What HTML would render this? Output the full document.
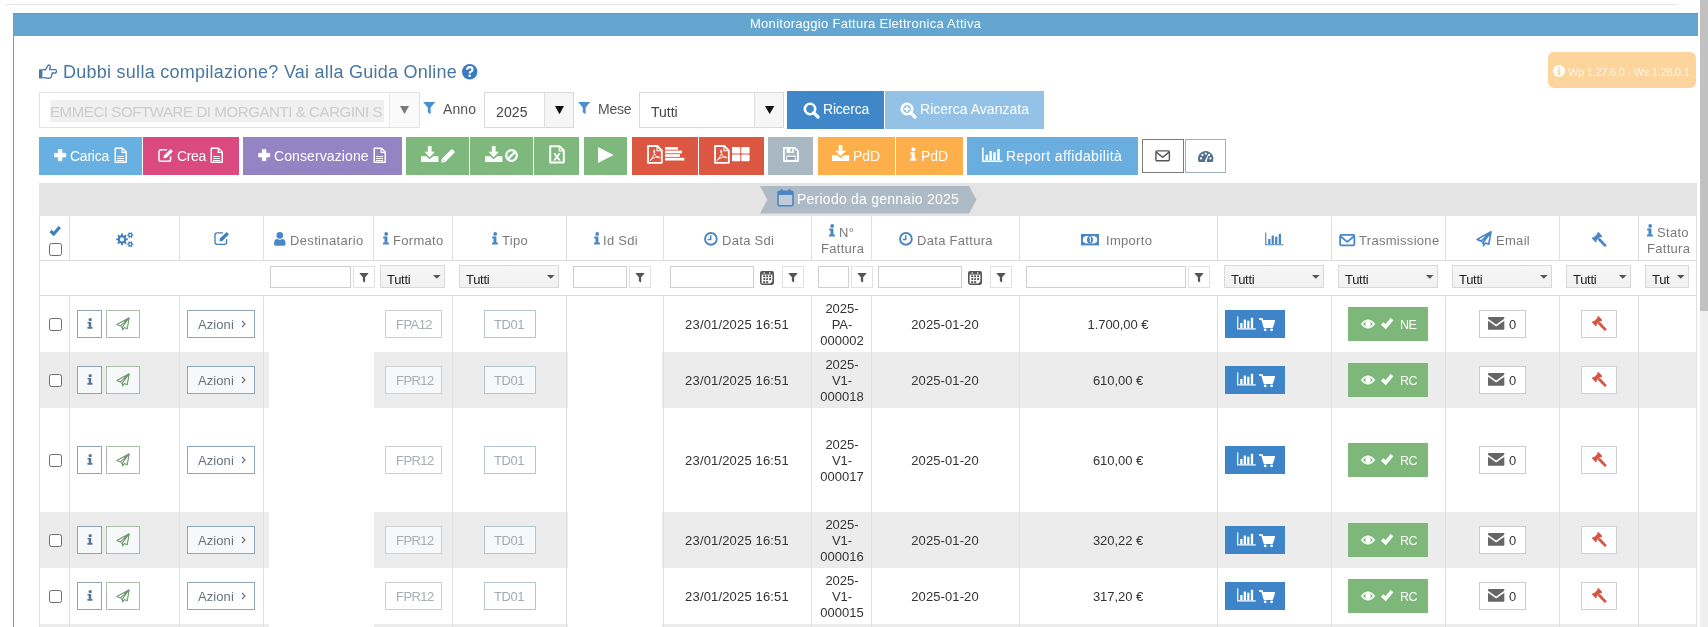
<!DOCTYPE html>
<html><head><meta charset="utf-8"><title>Monitoraggio Fattura Elettronica Attiva</title><style>
*{box-sizing:border-box;margin:0;padding:0}
html,body{width:1708px;height:627px;overflow:hidden;background:#fff;font-family:"Liberation Sans",sans-serif}
.a{position:absolute}
svg.a{display:block;overflow:visible}
.t{position:absolute;white-space:nowrap;line-height:1;will-change:transform}
</style></head><body>
<div class="a" style="left:5px;top:4px;width:1673px;height:1px;background:#e8e8e8"></div>
<div class="a" style="left:13px;top:13px;width:1px;height:614px;background:#7f99a5"></div>
<div class="a" style="left:13px;top:13px;width:1685px;height:23px;background:#64a6d0"></div>
<div class="a" style="left:13px;top:13px;width:1685px;height:1px;background:#6a98b4"></div>
<div class="t" style="left:750px;top:17.0px;font-size:13px;color:#fff;letter-spacing:0.28px">Monitoraggio Fattura Elettronica Attiva</div>
<div class="a" style="left:1700px;top:0px;width:8px;height:627px;background:#efefef"></div>
<div class="a" style="left:1700px;top:0px;width:8px;height:311px;background:#c1c1c1"></div>
<svg class="a" style="left:39px;top:64px" width="18" height="15" viewBox="0 0 18 15"><rect x="0" y="5.2" width="3.4" height="9.4" rx="0.5" fill="#4a79a6"/><path d="M3.4,5.8 H6.3 L8.6,2.2 Q9.4,0.9 10.4,1.1 Q11.6,1.5 11.3,3 L10.6,5.6 H16.4 Q17.5,5.6 17.5,7.3 Q17.5,9 16.3,9 H13.2 L12.4,12.6 Q12,14.1 10.6,14.1 Q8.1,14.4 6.1,13.6 H3.4" fill="none" stroke="#4a79a6" stroke-width="1.4" stroke-linejoin="round"/></svg>
<div class="t" style="left:63.3px;top:62.76px;font-size:18px;color:#4a77a2;letter-spacing:0.26px">Dubbi sulla compilazione? Vai alla Guida Online</div>
<svg class="a" style="left:462.3px;top:63.7px" width="15.4" height="15.4" viewBox="0 0 15.4 15.4"><circle cx="7.7" cy="7.7" r="7.7" fill="#3a7bbf"/><path d="M5.1,5.7 Q5.1,3.1000000000000005 7.7,3.1000000000000005 Q10.5,3.1000000000000005 10.5,5.4 Q10.5,6.9 8.7,7.7 Q7.7,8.2 7.7,9.5" fill="none" stroke="#fff" stroke-width="2.1"/><rect x="6.6" y="10.7" width="2.2" height="2.2" fill="#fff"/></svg>
<div class="a" style="left:1548px;top:52px;width:148px;height:36px;background:#fdd49b;border-radius:6px"></div>
<svg class="a" style="left:1552.5px;top:64.5px" width="12" height="12" viewBox="0 0 12 12"><circle cx="6.0" cy="6.0" r="6.0" fill="#fff"/><circle cx="6.0" cy="3.4" r="1.1" fill="#fdd49b"/><path d="M4.2,5.1 H6.9 V9.0 H7.7 V10.0 H4.2 V9.0 H5.1 V6.0H4.2Z" fill="#fdd49b"/></svg>
<div class="t" style="left:1568px;top:66.89px;font-size:11px;color:rgba(255,255,255,0.8);letter-spacing:-0.25px">Wp 1.27.6.0 - Ws 1.28.0.1</div>
<div class="a" style="left:39px;top:92px;width:381px;height:36px;background:#fff;border:1px solid #e3e3e3"></div>
<div class="a" style="left:50px;top:100px;width:334px;height:22px;background:#f0f0f0"></div>
<div class="t" style="left:50px;top:103.6px;font-size:15px;color:#cdcdcd;letter-spacing:-0.4px;width:333px;overflow:hidden">EMMECI SOFTWARE DI MORGANTI &amp; CARGINI SNC</div>
<div class="a" style="left:389px;top:93px;width:30px;height:34px;background:#fafafa;border-left:1px solid #e6e6e6"></div>
<svg class="a" style="left:400px;top:105.5px" width="9" height="8" viewBox="0 0 9 8"><path d="M0,0 H9 L4.5,8Z" fill="#7a7a7a"/></svg>
<svg class="a" style="left:423px;top:102.4px" width="12.4" height="12.2" viewBox="0 0 12 12"><path d="M0,0 H12 L7.4,5.4 V12 L4.6,10.2 V5.4Z" fill="#4a90d0"/></svg>
<div class="t" style="left:443px;top:102.15px;font-size:14px;color:#555;letter-spacing:0.1px">Anno</div>
<div class="a" style="left:484px;top:92px;width:90px;height:36px;background:#fff;border:1px solid #d9d9d9"></div>
<div class="a" style="left:544px;top:93px;width:29px;height:34px;background:#f6f6f6;border-left:1px solid #dedede"></div>
<div class="t" style="left:495.5px;top:104.85px;font-size:14px;color:#444;letter-spacing:0.1px">2025</div>
<svg class="a" style="left:554.6px;top:105.7px" width="9" height="8.2" viewBox="0 0 9 8.2"><path d="M0,0 H9 L4.5,8.2Z" fill="#111"/></svg>
<svg class="a" style="left:577.5px;top:102.4px" width="12.4" height="12.2" viewBox="0 0 12 12"><path d="M0,0 H12 L7.4,5.4 V12 L4.6,10.2 V5.4Z" fill="#4a90d0"/></svg>
<div class="t" style="left:597.7px;top:102.15px;font-size:14px;color:#555;letter-spacing:-0.2px">Mese</div>
<div class="a" style="left:639px;top:92px;width:145px;height:36px;background:#fff;border:1px solid #d9d9d9"></div>
<div class="a" style="left:754px;top:93px;width:29px;height:34px;background:#f6f6f6;border-left:1px solid #dedede"></div>
<div class="t" style="left:650.5px;top:104.85px;font-size:14px;color:#444">Tutti</div>
<svg class="a" style="left:764.7px;top:105.6px" width="9.3" height="8" viewBox="0 0 9.3 8"><path d="M0,0 H9.3 L4.65,8Z" fill="#111"/></svg>
<div class="a" style="left:787px;top:91px;width:97px;height:38px;background:#3f87c9"></div>
<svg class="a" style="left:802.7px;top:101.8px" width="16.5" height="16.5" viewBox="0 0 16.5 16.5"><circle cx="7" cy="7" r="5.2" fill="none" stroke="#fff" stroke-width="2.6"/><path d="M10.6,10.6 L15,15" stroke="#fff" stroke-width="3.2" stroke-linecap="round"/></svg>
<div class="t" style="left:822.6px;top:102.15px;font-size:14px;color:#fff;letter-spacing:-0.2px">Ricerca</div>
<div class="a" style="left:885px;top:91px;width:159px;height:38px;background:#94c2e7"></div>
<svg class="a" style="left:900px;top:101.8px" width="16.5" height="16.5" viewBox="0 0 16.5 16.5"><circle cx="7" cy="7" r="5.2" fill="none" stroke="#fff" stroke-width="2.6"/><path d="M10.6,10.6 L15,15" stroke="#fff" stroke-width="3.2" stroke-linecap="round"/><path d="M7,4.2 V9.8 M4.2,7 H9.8" stroke="#fff" stroke-width="1.8"/></svg>
<div class="t" style="left:920px;top:102.15px;font-size:14px;color:#fff;letter-spacing:0.02px">Ricerca Avanzata</div>
<div class="a" style="left:39px;top:137px;width:103px;height:38px;background:#67b0e1"></div>
<div class="a" style="left:143px;top:137px;width:96px;height:38px;background:#db4a7f"></div>
<div class="a" style="left:243px;top:137px;width:159px;height:38px;background:#9584c3"></div>
<div class="a" style="left:406px;top:137px;width:63px;height:38px;background:#7fb87c"></div>
<div class="a" style="left:470px;top:137px;width:63px;height:38px;background:#7fb87c"></div>
<div class="a" style="left:534px;top:137px;width:45px;height:38px;background:#7fb87c"></div>
<div class="a" style="left:584px;top:137px;width:43px;height:38px;background:#7fb87c"></div>
<div class="a" style="left:632px;top:137px;width:66px;height:38px;background:#dc5741"></div>
<div class="a" style="left:699px;top:137px;width:65px;height:38px;background:#dc5741"></div>
<div class="a" style="left:768px;top:137px;width:45px;height:38px;background:#a9b8c3"></div>
<div class="a" style="left:818px;top:137px;width:77px;height:38px;background:#fcaf4b"></div>
<div class="a" style="left:896px;top:137px;width:67px;height:38px;background:#fcaf4b"></div>
<div class="a" style="left:967px;top:137px;width:171px;height:38px;background:#6aaee0"></div>
<div class="a" style="left:1142px;top:139px;width:42px;height:34px;background:#fff;border:1px solid #7c7c7c"></div>
<div class="a" style="left:1185px;top:139px;width:41px;height:34px;background:#fff;border:1px solid #9db0bf"></div>
<svg class="a" style="left:53.7px;top:149px" width="12.3" height="12.3" viewBox="0 0 12 12"><path d="M4.2,0.5 H7.8 V4.2 H11.5 V7.8 H7.8 V11.5 H4.2 V7.8 H0.5 V4.2 H4.2Z" fill="#fff" stroke="#fff" stroke-width="0.6" stroke-linejoin="round"/></svg>
<div class="t" style="left:70.4px;top:148.85px;font-size:14px;color:#fff;letter-spacing:-0.25px">Carica</div>
<svg class="a" style="left:114px;top:147px" width="13" height="16" viewBox="0 0 13 16"><path d="M1.25,1.25 H8.5 L12.25,5 V15.25 H1.25Z" fill="none" stroke="#fff" stroke-width="1.5" stroke-linejoin="round"/><path d="M8.2,1.3 V5.3 H12.2" fill="none" stroke="#fff" stroke-width="1.2"/><path d="M3,9.5 H10 M3,11.5 H10 M3,13.5 H10" stroke="#fff" stroke-width="1"/></svg>
<svg class="a" style="left:158px;top:148.3px" width="15.5" height="14" viewBox="0 0 15.5 14"><path d="M9,1.8 H3.2 Q1,1.8 1,4 V11.2 Q1,13.3 3.2,13.3 H10.4 Q12.6,13.3 12.6,11.2 V8.2" fill="none" stroke="#fff" stroke-width="1.5"/><path d="M5.5,10.3 L5.9,7.6 L12.6,0.9 L15,3.3 L8.3,10 Z" fill="#fff"/></svg>
<div class="t" style="left:177.2px;top:148.85px;font-size:14px;color:#fff;letter-spacing:-0.35px">Crea</div>
<svg class="a" style="left:210px;top:147px" width="13" height="16" viewBox="0 0 13 16"><path d="M1.25,1.25 H8.5 L12.25,5 V15.25 H1.25Z" fill="none" stroke="#fff" stroke-width="1.5" stroke-linejoin="round"/><path d="M8.2,1.3 V5.3 H12.2" fill="none" stroke="#fff" stroke-width="1.2"/><path d="M3,9.5 H10 M3,11.5 H10 M3,13.5 H10" stroke="#fff" stroke-width="1"/></svg>
<svg class="a" style="left:258px;top:149px" width="12.3" height="12.3" viewBox="0 0 12 12"><path d="M4.2,0.5 H7.8 V4.2 H11.5 V7.8 H7.8 V11.5 H4.2 V7.8 H0.5 V4.2 H4.2Z" fill="#fff" stroke="#fff" stroke-width="0.6" stroke-linejoin="round"/></svg>
<div class="t" style="left:274px;top:148.85px;font-size:14px;color:#fff;letter-spacing:0.1px">Conservazione</div>
<svg class="a" style="left:373px;top:147px" width="13" height="16" viewBox="0 0 13 16"><path d="M1.25,1.25 H8.5 L12.25,5 V15.25 H1.25Z" fill="none" stroke="#fff" stroke-width="1.5" stroke-linejoin="round"/><path d="M8.2,1.3 V5.3 H12.2" fill="none" stroke="#fff" stroke-width="1.2"/><path d="M3,9.5 H10 M3,11.5 H10 M3,13.5 H10" stroke="#fff" stroke-width="1"/></svg>
<svg class="a" style="left:420.6px;top:145.8px" width="17.4" height="16" viewBox="0 0 17.4 16"><path d="M6.8,0 H10.6 V5.8 H14 L8.7,11.2 L3.4,5.8 H6.8Z" fill="#fff"/><path d="M0,10.2 H5.2 L8.7,13.2 L12.2,10.2 H17.4 V16 H0Z" fill="#fff"/></svg>
<svg class="a" style="left:440.8px;top:148.5px" width="14" height="14" viewBox="0 0 14 14"><path d="M0.2,13.8 L0.9,9.8 L9.9,0.8 Q10.9,-0.2 11.9,0.8 L13.2,2.1 Q14.2,3.1 13.2,4.1 L4.2,13.1Z" fill="#fff"/><path d="M1.6,12.4 L2.6,11.4" stroke="#7fb87c" stroke-width="0.9"/></svg>
<svg class="a" style="left:484.6px;top:145.8px" width="17.4" height="16" viewBox="0 0 17.4 16"><path d="M6.8,0 H10.6 V5.8 H14 L8.7,11.2 L3.4,5.8 H6.8Z" fill="#fff"/><path d="M0,10.2 H5.2 L8.7,13.2 L12.2,10.2 H17.4 V16 H0Z" fill="#fff"/></svg>
<svg class="a" style="left:505px;top:149.2px" width="13" height="13" viewBox="0 0 13 13"><circle cx="6.5" cy="6.5" r="5.3" fill="none" stroke="#fff" stroke-width="2.3"/><path d="M3,10 L10,3" stroke="#fff" stroke-width="2.3"/></svg>
<svg class="a" style="left:549.2px;top:145px" width="16" height="19" viewBox="0 0 16 19"><path d="M1.2,1.2 H10.5 L14.8,5.5 V17.6 H1.2Z" fill="none" stroke="#fff" stroke-width="2" stroke-linejoin="round"/><path d="M10.2,1.5 V5.8 H14.5" fill="none" stroke="#fff" stroke-width="1.2"/><path d="M4.4,8.3 H6.6 L8,10.6 L9.4,8.3 H11.6 L9.2,11.9 L11.8,15.6 H9.5 L8,13.2 L6.5,15.6 H4.2 L6.8,11.9Z" fill="#fff"/></svg>
<svg class="a" style="left:597.8px;top:146.7px" width="15.5" height="16" viewBox="0 0 15.5 16"><path d="M0,0 L15.5,8 L0,16Z" fill="#fff"/></svg>
<svg class="a" style="left:646.5px;top:144.9px" width="16" height="19" viewBox="0 0 16 19"><path d="M1,1 H10.3 L14.8,5.5 V17.8 H1Z" fill="none" stroke="#fff" stroke-width="1.8" stroke-linejoin="round"/><path d="M10,1.3 V5.8 H14.5" fill="none" stroke="#fff" stroke-width="1.1"/><path d="M3.2,15.6 Q5,13 7,10 Q8,7.5 7.6,5.4 Q7.3,4.3 6.8,5.3 Q6.5,7 8,9.7 Q9.5,12.2 12.3,12.8 Q13.2,12.9 12.6,12.2 Q11.5,11.5 8.5,12.2 Q5,13.2 3.2,15.6" fill="none" stroke="#fff" stroke-width="1"/></svg>
<svg class="a" style="left:665.2px;top:147.2px" width="19.3" height="13.5" viewBox="0 0 19.3 13.5"><rect x="0" y="0" width="13" height="2.7" fill="#fff"/><rect x="0" y="3.6" width="17" height="2.7" fill="#fff"/><rect x="0" y="7.2" width="15" height="2.7" fill="#fff"/><rect x="0" y="10.8" width="19.3" height="2.7" fill="#fff"/></svg>
<svg class="a" style="left:713.8px;top:144.9px" width="16" height="19" viewBox="0 0 16 19"><path d="M1,1 H10.3 L14.8,5.5 V17.8 H1Z" fill="none" stroke="#fff" stroke-width="1.8" stroke-linejoin="round"/><path d="M10,1.3 V5.8 H14.5" fill="none" stroke="#fff" stroke-width="1.1"/><path d="M3.2,15.6 Q5,13 7,10 Q8,7.5 7.6,5.4 Q7.3,4.3 6.8,5.3 Q6.5,7 8,9.7 Q9.5,12.2 12.3,12.8 Q13.2,12.9 12.6,12.2 Q11.5,11.5 8.5,12.2 Q5,13.2 3.2,15.6" fill="none" stroke="#fff" stroke-width="1"/></svg>
<svg class="a" style="left:732px;top:146.8px" width="17.6" height="14.2" viewBox="0 0 17.6 14.2"><rect x="0" y="0" width="8.3" height="6.6" rx="0.8" fill="#fff"/><rect x="9.3" y="0" width="8.3" height="6.6" rx="0.8" fill="#fff"/><rect x="0" y="7.6" width="8.3" height="6.6" rx="0.8" fill="#fff"/><rect x="9.3" y="7.6" width="8.3" height="6.6" rx="0.8" fill="#fff"/></svg>
<svg class="a" style="left:783.4px;top:146.9px" width="16" height="15" viewBox="0 0 16 15"><path d="M0.9,0.9 H11.8 L15,4.1 V14.1 H0.9Z" fill="none" stroke="#fff" stroke-width="1.8" stroke-linejoin="round"/><rect x="3.6" y="0.9" width="7.2" height="5" fill="#fff"/><rect x="7.4" y="1.6" width="1.8" height="3" fill="#a9b8c3"/><rect x="3.4" y="8.6" width="9.2" height="5.5" fill="#fff"/><rect x="4.3" y="9.8" width="7.4" height="3" fill="#8f9ea8"/></svg>
<svg class="a" style="left:832px;top:144.8px" width="17.2" height="16" viewBox="0 0 17.4 16"><path d="M6.8,0 H10.6 V5.8 H14 L8.7,11.2 L3.4,5.8 H6.8Z" fill="#fff"/><path d="M0,10.2 H5.2 L8.7,13.2 L12.2,10.2 H17.4 V16 H0Z" fill="#fff"/></svg>
<div class="t" style="left:852.5px;top:148.85px;font-size:14px;color:#fff;letter-spacing:-0.1px">PdD</div>
<svg class="a" style="left:910.4px;top:146.8px" width="6.4" height="14" viewBox="0 0 6 12.5"><circle cx="3.2" cy="1.9" r="1.9" fill="#fff"/><path d="M0.2,4.5 H4.4 V10.4 H5.9 V12.5 H0 V10.4 H1.5 V6.5 H0.2Z" fill="#fff"/></svg>
<div class="t" style="left:920.5px;top:148.85px;font-size:14px;color:#fff;letter-spacing:-0.1px">PdD</div>
<svg class="a" style="left:982px;top:146.7px" width="20.7" height="15.8" viewBox="0 0 20.5 14.5"><path d="M0.8,0 V13.6 H20.5" fill="none" stroke="#fff" stroke-width="1.6"/><rect x="3.5" y="7.2" width="2.5" height="5.6" fill="#fff"/><rect x="7.3" y="3.4" width="2.5" height="9.4" fill="#fff"/><rect x="11.1" y="4.7" width="2.5" height="8.1" fill="#fff"/><rect x="15.1" y="1.5" width="2.5" height="11.3" fill="#fff"/></svg>
<div class="t" style="left:1006.2px;top:148.85px;font-size:14px;color:#fff;letter-spacing:0.4px">Report affidabilità</div>
<svg class="a" style="left:1155px;top:150.2px" width="15.3" height="11.7" viewBox="0 0 15.6 12"><rect x="0.9" y="0.9" width="13.8" height="10.2" rx="1.1" fill="none" stroke="#555" stroke-width="1.45"/><path d="M1.2,2.2 L7.8,7.6 L14.4,2.2" fill="none" stroke="#555" stroke-width="1.45"/></svg>
<svg class="a" style="left:1197.7px;top:150.6px" width="15.4" height="11.2" viewBox="0 0 15.4 11.2"><path d="M0.75,11 A7.7,7.7 0 1,1 14.65,11Z" fill="#52708e"/><path d="M6.9,10.2 Q7.2,11.2 8.2,11 Q9.2,10.6 8.9,9.6 L10.6,3.6 L10.1,3.5 L7.4,8.8 Q6.6,9.4 6.9,10.2Z" fill="#fff"/><circle cx="3.0" cy="7.4" r="1.15" fill="#fff"/><circle cx="4.4" cy="4.0" r="1.15" fill="#fff"/><circle cx="7.7" cy="2.6" r="1.15" fill="#fff"/><circle cx="11.0" cy="4.0" r="1.15" fill="#fff"/><circle cx="12.4" cy="7.4" r="1.15" fill="#fff"/></svg>
<div class="a" style="left:39px;top:183px;width:1658px;height:33px;background:#e4e4e4"></div>
<svg class="a" style="left:759.5px;top:186px" width="217" height="27.5" viewBox="0 0 217 27.5"><polygon points="0,0 209,0 216.5,13.75 209,27.5 0,27.5 7.3,13.75" fill="#aebbc6"/></svg>
<svg class="a" style="left:776.7px;top:188.5px" width="17" height="17.6" viewBox="0 0 17 17.8"><rect x="0.9" y="2.4" width="15.2" height="14.6" rx="1.5" fill="#c0ccd6" stroke="#4a86c5" stroke-width="1.6"/><rect x="0.9" y="2.4" width="15.2" height="3.6" fill="#4a86c5"/><rect x="3.6" y="0" width="2" height="4.4" rx="0.6" fill="#4a86c5"/><rect x="11.4" y="0" width="2" height="4.4" rx="0.6" fill="#4a86c5"/></svg>
<div class="t" style="left:797px;top:192.15px;font-size:14px;color:#fff;letter-spacing:0.24px">Periodo da gennaio 2025</div>
<div class="a" style="left:39px;top:216px;width:1658px;height:79px;background:#fff"></div>
<div class="a" style="left:39px;top:352px;width:1658px;height:56px;background:#ececec"></div>
<div class="a" style="left:39px;top:512px;width:1658px;height:56px;background:#ececec"></div>
<div class="a" style="left:39px;top:624px;width:1658px;height:76px;background:#ececec"></div>
<div class="a" style="left:39px;top:216px;width:1px;height:44px;background:#e0e0e0"></div>
<div class="a" style="left:69px;top:216px;width:1px;height:44px;background:#e0e0e0"></div>
<div class="a" style="left:179px;top:216px;width:1px;height:44px;background:#e0e0e0"></div>
<div class="a" style="left:263px;top:216px;width:1px;height:44px;background:#e0e0e0"></div>
<div class="a" style="left:373px;top:216px;width:1px;height:44px;background:#e0e0e0"></div>
<div class="a" style="left:452px;top:216px;width:1px;height:44px;background:#e0e0e0"></div>
<div class="a" style="left:566px;top:216px;width:1px;height:44px;background:#e0e0e0"></div>
<div class="a" style="left:663px;top:216px;width:1px;height:44px;background:#e0e0e0"></div>
<div class="a" style="left:811px;top:216px;width:1px;height:44px;background:#e0e0e0"></div>
<div class="a" style="left:871px;top:216px;width:1px;height:44px;background:#e0e0e0"></div>
<div class="a" style="left:1019px;top:216px;width:1px;height:44px;background:#e0e0e0"></div>
<div class="a" style="left:1217px;top:216px;width:1px;height:44px;background:#e0e0e0"></div>
<div class="a" style="left:1331px;top:216px;width:1px;height:44px;background:#e0e0e0"></div>
<div class="a" style="left:1445px;top:216px;width:1px;height:44px;background:#e0e0e0"></div>
<div class="a" style="left:1559px;top:216px;width:1px;height:44px;background:#e0e0e0"></div>
<div class="a" style="left:1638px;top:216px;width:1px;height:44px;background:#e0e0e0"></div>
<div class="a" style="left:1696px;top:216px;width:1px;height:44px;background:#e0e0e0"></div>
<div class="a" style="left:39px;top:260px;width:1658px;height:1px;background:#dcdcdc"></div>
<div class="a" style="left:39px;top:295px;width:1658px;height:1px;background:#dcdcdc"></div>
<div class="a" style="left:39px;top:260px;width:1px;height:35px;background:#e0e0e0"></div>
<div class="a" style="left:1696px;top:260px;width:1px;height:35px;background:#e0e0e0"></div>
<div class="a" style="left:39px;top:296px;width:1px;height:331px;background:#e0e0e0"></div>
<div class="a" style="left:69px;top:296px;width:1px;height:331px;background:#e0e0e0"></div>
<div class="a" style="left:179px;top:296px;width:1px;height:331px;background:#e0e0e0"></div>
<div class="a" style="left:263px;top:296px;width:1px;height:331px;background:#e0e0e0"></div>
<div class="a" style="left:452px;top:296px;width:1px;height:331px;background:#e0e0e0"></div>
<div class="a" style="left:566px;top:296px;width:1px;height:331px;background:#e0e0e0"></div>
<div class="a" style="left:663px;top:296px;width:1px;height:331px;background:#e0e0e0"></div>
<div class="a" style="left:811px;top:296px;width:1px;height:331px;background:#e0e0e0"></div>
<div class="a" style="left:871px;top:296px;width:1px;height:331px;background:#e0e0e0"></div>
<div class="a" style="left:1019px;top:296px;width:1px;height:331px;background:#e0e0e0"></div>
<div class="a" style="left:1217px;top:296px;width:1px;height:331px;background:#e0e0e0"></div>
<div class="a" style="left:1331px;top:296px;width:1px;height:331px;background:#e0e0e0"></div>
<div class="a" style="left:1445px;top:296px;width:1px;height:331px;background:#e0e0e0"></div>
<div class="a" style="left:1559px;top:296px;width:1px;height:331px;background:#e0e0e0"></div>
<div class="a" style="left:1638px;top:296px;width:1px;height:331px;background:#e0e0e0"></div>
<div class="a" style="left:1696px;top:296px;width:1px;height:331px;background:#e0e0e0"></div>
<div class="a" style="left:269px;top:296px;width:105px;height:56px;background:#fff"></div>
<div class="a" style="left:568px;top:296px;width:94px;height:56px;background:#fff"></div>
<div class="a" style="left:269px;top:352px;width:105px;height:56px;background:#fff"></div>
<div class="a" style="left:568px;top:352px;width:94px;height:56px;background:#fff"></div>
<div class="a" style="left:269px;top:408px;width:105px;height:104px;background:#fff"></div>
<div class="a" style="left:568px;top:408px;width:94px;height:104px;background:#fff"></div>
<div class="a" style="left:269px;top:512px;width:105px;height:56px;background:#fff"></div>
<div class="a" style="left:568px;top:512px;width:94px;height:56px;background:#fff"></div>
<div class="a" style="left:269px;top:568px;width:105px;height:56px;background:#fff"></div>
<div class="a" style="left:568px;top:568px;width:94px;height:56px;background:#fff"></div>
<div class="a" style="left:269px;top:624px;width:105px;height:76px;background:#fff"></div>
<div class="a" style="left:568px;top:624px;width:94px;height:76px;background:#fff"></div>
<svg class="a" style="left:49.2px;top:224.8px" width="12.2" height="10.2" viewBox="0 0 12 10.5"><path d="M1.3,6.2 L4.6,9.3 L10.8,2" fill="none" stroke="#3f7fbf" stroke-width="3.3" stroke-linecap="butt" stroke-linejoin="miter"/></svg>
<div class="a" style="left:49px;top:243px;width:13px;height:13px;background:#fff;border:1px solid #6b6b6b;border-radius:2.5px"></div>
<svg class="a" style="left:115.8px;top:231.6px" width="17.6" height="15.6" viewBox="0 0 17.6 15.6"><path d="M9.97,5.75 L10.20,6.48 L11.82,6.45 L11.82,8.35 L10.20,8.32 L9.97,9.05 L9.62,9.72 L10.79,10.84 L9.44,12.19 L8.32,11.02 L7.65,11.37 L6.92,11.60 L6.95,13.22 L5.05,13.22 L5.08,11.60 L4.35,11.37 L3.68,11.02 L2.56,12.19 L1.21,10.84 L2.38,9.72 L2.03,9.05 L1.80,8.32 L0.18,8.35 L0.18,6.45 L1.80,6.48 L2.03,5.75 L2.38,5.08 L1.21,3.96 L2.56,2.61 L3.68,3.78 L4.35,3.43 L5.08,3.20 L5.05,1.58 L6.95,1.58 L6.92,3.20 L7.65,3.43 L8.32,3.78 L9.44,2.61 L10.79,3.96 L9.62,5.08Z M8.10,7.40 A2.1,2.1 0 1,0 3.90,7.40 A2.1,2.1 0 1,0 8.10,7.40Z M16.21,2.00 L16.39,2.42 L17.31,2.38 L17.31,3.82 L16.39,3.78 L16.21,4.20 L15.93,4.57 L16.43,5.35 L15.18,6.07 L14.76,5.25 L14.30,5.30 L13.84,5.25 L13.42,6.07 L12.17,5.35 L12.67,4.57 L12.39,4.20 L12.21,3.78 L11.29,3.82 L11.29,2.38 L12.21,2.42 L12.39,2.00 L12.67,1.63 L12.17,0.85 L13.42,0.13 L13.84,0.95 L14.30,0.90 L14.76,0.95 L15.18,0.13 L16.43,0.85 L15.93,1.63Z M15.30,3.10 A1.0,1.0 0 1,0 13.30,3.10 A1.0,1.0 0 1,0 15.30,3.10Z M16.21,11.10 L16.39,11.52 L17.31,11.48 L17.31,12.92 L16.39,12.88 L16.21,13.30 L15.93,13.67 L16.43,14.45 L15.18,15.17 L14.76,14.35 L14.30,14.40 L13.84,14.35 L13.42,15.17 L12.17,14.45 L12.67,13.67 L12.39,13.30 L12.21,12.88 L11.29,12.92 L11.29,11.48 L12.21,11.52 L12.39,11.10 L12.67,10.73 L12.17,9.95 L13.42,9.23 L13.84,10.05 L14.30,10.00 L14.76,10.05 L15.18,9.23 L16.43,9.95 L15.93,10.73Z M15.30,12.20 A1.0,1.0 0 1,0 13.30,12.20 A1.0,1.0 0 1,0 15.30,12.20Z" fill="#3f7fbf" fill-rule="evenodd"/></svg>
<svg class="a" style="left:214px;top:231.2px" width="15.5" height="14" viewBox="0 0 15.5 14"><path d="M9,1.8 H3.2 Q1,1.8 1,4 V11.2 Q1,13.3 3.2,13.3 H10.4 Q12.6,13.3 12.6,11.2 V8.2" fill="none" stroke="#3f7fbf" stroke-width="1.35"/><path d="M5.5,10.3 L5.9,7.6 L12.6,0.9 L15,3.3 L8.3,10 Z" fill="#3f7fbf"/></svg>
<svg class="a" style="left:274px;top:232.2px" width="11.6" height="14" viewBox="0 0 11.6 14"><circle cx="5.8" cy="3.4" r="3.3" fill="#4887c8"/><path d="M0,11.8 Q0,7.6 2.8,7 Q5.8,8.6 8.8,7 Q11.6,7.6 11.6,11.8 Q11.6,13.8 9.8,13.8 H1.8 Q0,13.8 0,11.8Z" fill="#4887c8"/></svg>
<div class="t" style="left:289.6px;top:233.7px;font-size:13px;color:#7a7a7a;letter-spacing:0.34px">Destinatario</div>
<svg class="a" style="left:382.7px;top:232.3px" width="6" height="12.5" viewBox="0 0 6 12.5"><circle cx="3.2" cy="1.9" r="1.9" fill="#4887c8"/><path d="M0.2,4.5 H4.4 V10.4 H5.9 V12.5 H0 V10.4 H1.5 V6.5 H0.2Z" fill="#4887c8"/></svg>
<div class="t" style="left:392.6px;top:233.7px;font-size:13px;color:#7a7a7a;letter-spacing:0.31px">Formato</div>
<svg class="a" style="left:492.3px;top:232.3px" width="6" height="12.5" viewBox="0 0 6 12.5"><circle cx="3.2" cy="1.9" r="1.9" fill="#4887c8"/><path d="M0.2,4.5 H4.4 V10.4 H5.9 V12.5 H0 V10.4 H1.5 V6.5 H0.2Z" fill="#4887c8"/></svg>
<div class="t" style="left:501.8px;top:233.7px;font-size:13px;color:#7a7a7a;letter-spacing:0.3px">Tipo</div>
<svg class="a" style="left:594px;top:232.3px" width="6" height="12.5" viewBox="0 0 6 12.5"><circle cx="3.2" cy="1.9" r="1.9" fill="#4887c8"/><path d="M0.2,4.5 H4.4 V10.4 H5.9 V12.5 H0 V10.4 H1.5 V6.5 H0.2Z" fill="#4887c8"/></svg>
<div class="t" style="left:603px;top:233.7px;font-size:13px;color:#7a7a7a;letter-spacing:0.3px">Id Sdi</div>
<svg class="a" style="left:704px;top:232.2px" width="13.8" height="13.8" viewBox="0 0 13.8 13.8"><circle cx="6.9" cy="6.9" r="5.8500000000000005" fill="none" stroke="#4b86c0" stroke-width="1.9"/><path d="M6.7,3.3000000000000003 V7.5 H3.7" fill="none" stroke="#4b86c0" stroke-width="1.5"/></svg>
<div class="t" style="left:721.6px;top:233.7px;font-size:13px;color:#7a7a7a;letter-spacing:0.3px">Data Sdi</div>
<svg class="a" style="left:829px;top:224.2px" width="6" height="12.5" viewBox="0 0 6 12.5"><circle cx="3.2" cy="1.9" r="1.9" fill="#4887c8"/><path d="M0.2,4.5 H4.4 V10.4 H5.9 V12.5 H0 V10.4 H1.5 V6.5 H0.2Z" fill="#4887c8"/></svg>
<div class="t" style="left:838.8px;top:225.7px;font-size:13px;color:#7a7a7a;letter-spacing:0.3px">N°</div>
<div class="t" style="left:820.7px;top:241.7px;font-size:13px;color:#7a7a7a;letter-spacing:0.3px">Fattura</div>
<svg class="a" style="left:899.2px;top:232.2px" width="13.8" height="13.8" viewBox="0 0 13.8 13.8"><circle cx="6.9" cy="6.9" r="5.8500000000000005" fill="none" stroke="#4b86c0" stroke-width="1.9"/><path d="M6.7,3.3000000000000003 V7.5 H3.7" fill="none" stroke="#4b86c0" stroke-width="1.5"/></svg>
<div class="t" style="left:917.3px;top:233.7px;font-size:13px;color:#7a7a7a;letter-spacing:0.3px">Data Fattura</div>
<svg class="a" style="left:1081.2px;top:233.6px" width="18" height="11.4" viewBox="0 0 18 11.4"><rect x="1" y="1" width="16" height="9.4" fill="none" stroke="#4887c8" stroke-width="2"/><path d="M1,1 H4.2 Q4.2,3.6 1,3.6Z M17,1 H13.8 Q13.8,3.6 17,3.6Z M1,10.4 H4.2 Q4.2,7.8 1,7.8Z M17,10.4 H13.8 Q13.8,7.8 17,7.8Z" fill="#4887c8"/><ellipse cx="9" cy="5.7" rx="3" ry="3.8" fill="#4887c8"/><path d="M8.2,3.8 L9.4,3.2 V8.2" fill="none" stroke="#fff" stroke-width="1"/></svg>
<div class="t" style="left:1106.3px;top:233.7px;font-size:13px;color:#7a7a7a;letter-spacing:0.3px">Importo</div>
<svg class="a" style="left:1264.8px;top:232px" width="18.6" height="14" viewBox="0 0 20.5 14.5"><path d="M0.8,0 V13.6 H20.5" fill="none" stroke="#4887c8" stroke-width="1.3"/><rect x="3.5" y="7.2" width="2.5" height="5.6" fill="#4887c8"/><rect x="7.3" y="3.4" width="2.5" height="9.4" fill="#4887c8"/><rect x="11.1" y="4.7" width="2.5" height="8.1" fill="#4887c8"/><rect x="15.1" y="1.5" width="2.5" height="11.3" fill="#4887c8"/></svg>
<svg class="a" style="left:1338.8px;top:233.8px" width="16.5" height="12.4" viewBox="0 0 15.6 12"><rect x="0.9" y="0.9" width="13.8" height="10.2" rx="1.1" fill="none" stroke="#4887c8" stroke-width="1.7"/><path d="M1.2,2.2 L7.8,7.6 L14.4,2.2" fill="none" stroke="#4887c8" stroke-width="1.7"/></svg>
<div class="t" style="left:1359.3px;top:233.7px;font-size:13px;color:#7a7a7a;letter-spacing:0.3px">Trasmissione</div>
<svg class="a" style="left:1476.2px;top:231.4px" width="16" height="15.6" viewBox="0 0 16 16"><path d="M15.2,0.8 L0.9,8.6 L5.2,10.4 L15.2,0.8 L7.3,11.6 L7.6,15 L9.6,12.3 L12.9,13.6Z" fill="none" stroke="#4887c8" stroke-width="1.7" stroke-linejoin="round"/><path d="M5.2,10.4 L7.6,15 L7.3,11.6Z" fill="#4887c8"/></svg>
<div class="t" style="left:1496.2px;top:233.7px;font-size:13px;color:#7a7a7a;letter-spacing:0.3px">Email</div>
<svg class="a" style="left:1590.7px;top:231.8px" width="16" height="15.4" viewBox="0 0 16 16"><g transform="rotate(-43 5.9 5.4)"><rect x="1.9" y="3.3" width="8" height="4.2" fill="#4887c8"/><rect x="1.2" y="2.3" width="2" height="6.2" rx="0.6" fill="#4887c8"/><rect x="8.6" y="2.3" width="2" height="6.2" rx="0.6" fill="#4887c8"/></g><path d="M8.4,7.9 L14.3,13.9" stroke="#4887c8" stroke-width="2.9" stroke-linecap="round"/></svg>
<svg class="a" style="left:1646.9px;top:224.2px" width="6" height="12.5" viewBox="0 0 6 12.5"><circle cx="3.2" cy="1.9" r="1.9" fill="#4887c8"/><path d="M0.2,4.5 H4.4 V10.4 H5.9 V12.5 H0 V10.4 H1.5 V6.5 H0.2Z" fill="#4887c8"/></svg>
<div class="t" style="left:1657px;top:225.7px;font-size:13px;color:#7a7a7a;letter-spacing:0.3px">Stato</div>
<div class="t" style="left:1646.5px;top:241.7px;font-size:13px;color:#7a7a7a;letter-spacing:0.3px">Fattura</div>
<div class="a" style="left:270px;top:266px;width:81px;height:22px;background:#fff;border:1px solid #cfcfcf"></div>
<div class="a" style="left:353px;top:266px;width:22px;height:22px;background:#fff;border:1px solid #e2e2e2"></div>
<svg class="a" style="left:359.0px;top:272.8px" width="10" height="9.6" viewBox="0 0 12 12"><path d="M0,0 H12 L7.4,5.4 V12 L4.6,10.2 V5.4Z" fill="#555"/></svg>
<div class="a" style="left:380px;top:265px;width:65px;height:23px;background:linear-gradient(#f6f6f6,#f1f1f1);border:1px solid #d9d9d9"></div>
<div class="t" style="left:386.6px;top:272.8px;font-size:13px;color:#222;letter-spacing:-0.3px">Tutti</div>
<svg class="a" style="left:432.8px;top:275px" width="7.6" height="3.8" viewBox="0 0 7.6 3.8"><path d="M0,0 H7.6 L3.8,3.8Z" fill="#555"/></svg>
<div class="a" style="left:459px;top:265px;width:100px;height:23px;background:linear-gradient(#f6f6f6,#f1f1f1);border:1px solid #d9d9d9"></div>
<div class="t" style="left:465.6px;top:272.8px;font-size:13px;color:#222;letter-spacing:-0.3px">Tutti</div>
<svg class="a" style="left:546.8px;top:275px" width="7.6" height="3.8" viewBox="0 0 7.6 3.8"><path d="M0,0 H7.6 L3.8,3.8Z" fill="#555"/></svg>
<div class="a" style="left:573px;top:266px;width:54px;height:22px;background:#fff;border:1px solid #cfcfcf"></div>
<div class="a" style="left:629px;top:266px;width:22px;height:22px;background:#fff;border:1px solid #e2e2e2"></div>
<svg class="a" style="left:635.0px;top:272.8px" width="10" height="9.6" viewBox="0 0 12 12"><path d="M0,0 H12 L7.4,5.4 V12 L4.6,10.2 V5.4Z" fill="#555"/></svg>
<div class="a" style="left:670px;top:266px;width:84px;height:22px;background:#fff;border:1px solid #cfcfcf"></div>
<svg class="a" style="left:760.2px;top:270.7px" width="14" height="14" viewBox="0 0 14 14"><rect x="0.8" y="0.8" width="12.4" height="12.4" rx="1.6" fill="none" stroke="#555" stroke-width="1.6"/><rect x="0.8" y="0.8" width="12.4" height="2.8" fill="#555"/><circle cx="4.2" cy="2" r="0.8" fill="#fff"/><circle cx="9.7" cy="2" r="0.8" fill="#fff"/><path d="M13.2,9.6 L9.8,13.2 H13.2Z" fill="#555"/><rect x="3.3" y="4.3" width="1.9" height="1.9" fill="#555"/><rect x="3.3" y="7.2" width="1.9" height="1.9" fill="#555"/><rect x="3.3" y="10.2" width="1.9" height="1.9" fill="#555"/><rect x="6.2" y="4.3" width="1.9" height="1.9" fill="#555"/><rect x="6.2" y="7.2" width="1.9" height="1.9" fill="#555"/><rect x="6.2" y="10.2" width="1.9" height="1.9" fill="#555"/><rect x="9.2" y="4.3" width="1.9" height="1.9" fill="#555"/><rect x="9.2" y="7.2" width="1.9" height="1.9" fill="#555"/></svg>
<div class="a" style="left:782px;top:266px;width:22px;height:22px;background:#fff;border:1px solid #e2e2e2"></div>
<svg class="a" style="left:788.0px;top:272.8px" width="10" height="9.6" viewBox="0 0 12 12"><path d="M0,0 H12 L7.4,5.4 V12 L4.6,10.2 V5.4Z" fill="#555"/></svg>
<div class="a" style="left:818px;top:266px;width:31px;height:22px;background:#fff;border:1px solid #cfcfcf"></div>
<div class="a" style="left:851px;top:266px;width:22px;height:22px;background:#fff;border:1px solid #e2e2e2"></div>
<svg class="a" style="left:857.0px;top:272.8px" width="10" height="9.6" viewBox="0 0 12 12"><path d="M0,0 H12 L7.4,5.4 V12 L4.6,10.2 V5.4Z" fill="#555"/></svg>
<div class="a" style="left:878px;top:266px;width:84px;height:22px;background:#fff;border:1px solid #cfcfcf"></div>
<svg class="a" style="left:967.9px;top:270.8px" width="14" height="14" viewBox="0 0 14 14"><rect x="0.8" y="0.8" width="12.4" height="12.4" rx="1.6" fill="none" stroke="#555" stroke-width="1.6"/><rect x="0.8" y="0.8" width="12.4" height="2.8" fill="#555"/><circle cx="4.2" cy="2" r="0.8" fill="#fff"/><circle cx="9.7" cy="2" r="0.8" fill="#fff"/><path d="M13.2,9.6 L9.8,13.2 H13.2Z" fill="#555"/><rect x="3.3" y="4.3" width="1.9" height="1.9" fill="#555"/><rect x="3.3" y="7.2" width="1.9" height="1.9" fill="#555"/><rect x="3.3" y="10.2" width="1.9" height="1.9" fill="#555"/><rect x="6.2" y="4.3" width="1.9" height="1.9" fill="#555"/><rect x="6.2" y="7.2" width="1.9" height="1.9" fill="#555"/><rect x="6.2" y="10.2" width="1.9" height="1.9" fill="#555"/><rect x="9.2" y="4.3" width="1.9" height="1.9" fill="#555"/><rect x="9.2" y="7.2" width="1.9" height="1.9" fill="#555"/></svg>
<div class="a" style="left:990px;top:266px;width:22px;height:22px;background:#fff;border:1px solid #e2e2e2"></div>
<svg class="a" style="left:996.0px;top:272.8px" width="10" height="9.6" viewBox="0 0 12 12"><path d="M0,0 H12 L7.4,5.4 V12 L4.6,10.2 V5.4Z" fill="#555"/></svg>
<div class="a" style="left:1026px;top:266px;width:160px;height:22px;background:#fff;border:1px solid #cfcfcf"></div>
<div class="a" style="left:1188px;top:266px;width:22px;height:22px;background:#fff;border:1px solid #e2e2e2"></div>
<svg class="a" style="left:1194.0px;top:272.8px" width="10" height="9.6" viewBox="0 0 12 12"><path d="M0,0 H12 L7.4,5.4 V12 L4.6,10.2 V5.4Z" fill="#555"/></svg>
<div class="a" style="left:1224px;top:265px;width:100px;height:23px;background:linear-gradient(#f6f6f6,#f1f1f1);border:1px solid #d9d9d9"></div>
<div class="t" style="left:1230.6px;top:272.8px;font-size:13px;color:#222;letter-spacing:-0.3px">Tutti</div>
<svg class="a" style="left:1311.8px;top:275px" width="7.6" height="3.8" viewBox="0 0 7.6 3.8"><path d="M0,0 H7.6 L3.8,3.8Z" fill="#555"/></svg>
<div class="a" style="left:1338px;top:265px;width:100px;height:23px;background:linear-gradient(#f6f6f6,#f1f1f1);border:1px solid #d9d9d9"></div>
<div class="t" style="left:1344.6px;top:272.8px;font-size:13px;color:#222;letter-spacing:-0.3px">Tutti</div>
<svg class="a" style="left:1425.8px;top:275px" width="7.6" height="3.8" viewBox="0 0 7.6 3.8"><path d="M0,0 H7.6 L3.8,3.8Z" fill="#555"/></svg>
<div class="a" style="left:1452px;top:265px;width:100px;height:23px;background:linear-gradient(#f6f6f6,#f1f1f1);border:1px solid #d9d9d9"></div>
<div class="t" style="left:1458.6px;top:272.8px;font-size:13px;color:#222;letter-spacing:-0.3px">Tutti</div>
<svg class="a" style="left:1539.8px;top:275px" width="7.6" height="3.8" viewBox="0 0 7.6 3.8"><path d="M0,0 H7.6 L3.8,3.8Z" fill="#555"/></svg>
<div class="a" style="left:1566px;top:265px;width:65px;height:23px;background:linear-gradient(#f6f6f6,#f1f1f1);border:1px solid #d9d9d9"></div>
<div class="t" style="left:1572.6px;top:272.8px;font-size:13px;color:#222;letter-spacing:-0.3px">Tutti</div>
<svg class="a" style="left:1618.8px;top:275px" width="7.6" height="3.8" viewBox="0 0 7.6 3.8"><path d="M0,0 H7.6 L3.8,3.8Z" fill="#555"/></svg>
<div class="a" style="left:1645px;top:265px;width:44px;height:23px;background:linear-gradient(#f6f6f6,#f1f1f1);border:1px solid #d9d9d9"></div>
<div class="t" style="left:1651.6px;top:272.8px;font-size:13px;color:#222;letter-spacing:-0.3px">Tut</div>
<svg class="a" style="left:1676.8px;top:275px" width="7.6" height="3.8" viewBox="0 0 7.6 3.8"><path d="M0,0 H7.6 L3.8,3.8Z" fill="#555"/></svg>
<div class="a" style="left:49px;top:318.0px;width:13px;height:13px;background:#fff;border:1px solid #6b6b6b;border-radius:2.5px"></div>
<div class="a" style="left:77px;top:310.0px;width:25px;height:28px;background:#fff;border:1px solid #8fa4b6"></div>
<svg class="a" style="left:87px;top:318.2px" width="6" height="10.8" viewBox="0 0 6 12.5"><circle cx="3.2" cy="1.9" r="1.9" fill="#56769b"/><path d="M0.2,4.5 H4.4 V10.4 H5.9 V12.5 H0 V10.4 H1.5 V6.5 H0.2Z" fill="#56769b"/></svg>
<div class="a" style="left:106px;top:310.0px;width:34px;height:28px;background:#fff;border:1px solid #adbea9"></div>
<svg class="a" style="left:116px;top:317.0px" width="14" height="13.8" viewBox="0 0 16 16"><path d="M15.2,0.8 L0.9,8.6 L5.2,10.4 L15.2,0.8 L7.3,11.6 L7.6,15 L9.6,12.3 L12.9,13.6Z" fill="none" stroke="#6d9669" stroke-width="1.25" stroke-linejoin="round"/><path d="M5.2,10.4 L7.6,15 L7.3,11.6Z" fill="#6d9669"/></svg>
<div class="a" style="left:187px;top:310.0px;width:68px;height:28px;background:#fff;border:1px solid #8ea7ba"></div>
<div class="t" style="left:197.7px;top:318.0px;font-size:13px;color:#66737f;letter-spacing:0.08px">Azioni</div>
<svg class="a" style="left:240.6px;top:320.4px" width="5" height="8" viewBox="0 0 5 8"><path d="M1,1 L4,4 L1,7" fill="none" stroke="#66737f" stroke-width="1.1"/></svg>
<div class="a" style="left:385px;top:310.0px;width:57px;height:28px;background:#fff;border:1px solid #cdd3ca"></div>
<div class="t" style="left:395.6px;top:318.0px;font-size:13px;color:#a9aeb3;letter-spacing:-0.55px">FPA12</div>
<div class="a" style="left:484px;top:310.0px;width:52px;height:28px;background:#fff;border:1px solid #b5c6ce"></div>
<div class="t" style="left:494.2px;top:318.0px;font-size:13px;color:#a3abb2;letter-spacing:-0.45px">TD01</div>
<div class="t" style="left:587px;width:300px;text-align:center;top:318.0px;font-size:13px;color:#333;letter-spacing:0.16px">23/01/2025 16:51</div>
<div class="t" style="left:691.5px;width:300px;text-align:center;top:302.0px;font-size:13px;color:#333">2025-</div>
<div class="t" style="left:691.5px;width:300px;text-align:center;top:318.0px;font-size:13px;color:#333">PA-</div>
<div class="t" style="left:691.5px;width:300px;text-align:center;top:334.0px;font-size:13px;color:#333">000002</div>
<div class="t" style="left:795px;width:300px;text-align:center;top:318.0px;font-size:13px;color:#333;letter-spacing:0.1px">2025-01-20</div>
<div class="t" style="left:968px;width:300px;text-align:center;top:318.0px;font-size:13px;color:#333;letter-spacing:-0.05px">1.700,00 €</div>
<div class="a" style="left:1225px;top:310.0px;width:60px;height:28px;background:#3d85c8"></div>
<svg class="a" style="left:1236.8px;top:316.0px" width="18.8" height="14.2" viewBox="0 0 20.5 14.5"><path d="M0.8,0 V13.6 H20.5" fill="none" stroke="#fff" stroke-width="1.3"/><rect x="3.5" y="7.2" width="2.5" height="5.6" fill="#fff"/><rect x="7.3" y="3.4" width="2.5" height="9.4" fill="#fff"/><rect x="11.1" y="4.7" width="2.5" height="8.1" fill="#fff"/><rect x="15.1" y="1.5" width="2.5" height="11.3" fill="#fff"/></svg>
<svg class="a" style="left:1258.8px;top:318.0px" width="15.2" height="13.2" viewBox="0 0 15.2 13.2"><path d="M0,0.9 H3 L5.4,9 H13.3 L15.2,2.8 H4" fill="none" stroke="#fff" stroke-width="1.8" stroke-linejoin="round"/><path d="M4,2.8 H15.2 L13.3,9 H5.4Z" fill="#fff"/><circle cx="6.2" cy="11.8" r="1.4" fill="#fff"/><circle cx="12.6" cy="11.8" r="1.4" fill="#fff"/></svg>
<div class="a" style="left:1348px;top:307.0px;width:80px;height:34px;background:#7eb77a"></div>
<svg class="a" style="left:1360.8px;top:319.0px" width="14" height="10" viewBox="0 0 14 10"><path d="M0.8,5 Q7,-2.2 13.2,5 Q7,12.2 0.8,5Z" fill="none" stroke="#fff" stroke-width="1.6"/><circle cx="7" cy="5" r="2.7" fill="#fff"/></svg>
<svg class="a" style="left:1379.6px;top:317.4px" width="14.2" height="10.9" viewBox="0 0 12 10.5"><path d="M1.3,6.2 L4.6,9.3 L10.8,2" fill="none" stroke="#fff" stroke-width="3.4" stroke-linecap="butt" stroke-linejoin="miter"/></svg>
<div class="t" style="left:1399.5px;top:318.92px;font-size:12.5px;color:#fff;letter-spacing:-0.6px">NE</div>
<div class="a" style="left:1479px;top:310.0px;width:47px;height:28px;background:#fff;border:1px solid #cbcbcb"></div>
<svg class="a" style="left:1488.3px;top:317.2px" width="16.3" height="12.8" viewBox="0 0 16.3 12.8"><path d="M0,0.8 Q0,0 0.8,0 H15.5 Q16.3,0 16.3,0.8 V1.8 L8.15,7.4 L0,1.8Z" fill="#666"/><path d="M0,3.8 L8.15,9.4 L16.3,3.8 V12 Q16.3,12.8 15.5,12.8 H0.8 Q0,12.8 0,12Z" fill="#666"/></svg>
<div class="t" style="left:1509px;top:318.0px;font-size:13px;color:#333">0</div>
<div class="a" style="left:1581px;top:310.0px;width:36px;height:28px;background:#fff;border:1px solid #cfcfcf"></div>
<svg class="a" style="left:1590.8px;top:315.8px" width="16.2" height="15.4" viewBox="0 0 16 16"><g transform="rotate(-43 5.9 5.4)"><rect x="1.9" y="3.3" width="8" height="4.2" fill="#d9533f"/><rect x="1.2" y="2.3" width="2" height="6.2" rx="0.6" fill="#d9533f"/><rect x="8.6" y="2.3" width="2" height="6.2" rx="0.6" fill="#d9533f"/></g><path d="M8.4,7.9 L14.3,13.9" stroke="#d9533f" stroke-width="2.9" stroke-linecap="round"/></svg>
<div class="a" style="left:49px;top:374.0px;width:13px;height:13px;background:#fff;border:1px solid #6b6b6b;border-radius:2.5px"></div>
<div class="a" style="left:77px;top:366.0px;width:25px;height:28px;background:#f7f8fa;border:1px solid #8fa4b6"></div>
<svg class="a" style="left:87px;top:374.2px" width="6" height="10.8" viewBox="0 0 6 12.5"><circle cx="3.2" cy="1.9" r="1.9" fill="#56769b"/><path d="M0.2,4.5 H4.4 V10.4 H5.9 V12.5 H0 V10.4 H1.5 V6.5 H0.2Z" fill="#56769b"/></svg>
<div class="a" style="left:106px;top:366.0px;width:34px;height:28px;background:#f7f8fa;border:1px solid #adbea9"></div>
<svg class="a" style="left:116px;top:373.0px" width="14" height="13.8" viewBox="0 0 16 16"><path d="M15.2,0.8 L0.9,8.6 L5.2,10.4 L15.2,0.8 L7.3,11.6 L7.6,15 L9.6,12.3 L12.9,13.6Z" fill="none" stroke="#6d9669" stroke-width="1.25" stroke-linejoin="round"/><path d="M5.2,10.4 L7.6,15 L7.3,11.6Z" fill="#6d9669"/></svg>
<div class="a" style="left:187px;top:366.0px;width:68px;height:28px;background:#f7f8fa;border:1px solid #8ea7ba"></div>
<div class="t" style="left:197.7px;top:374.0px;font-size:13px;color:#66737f;letter-spacing:0.08px">Azioni</div>
<svg class="a" style="left:240.6px;top:376.4px" width="5" height="8" viewBox="0 0 5 8"><path d="M1,1 L4,4 L1,7" fill="none" stroke="#66737f" stroke-width="1.1"/></svg>
<div class="a" style="left:385px;top:366.0px;width:57px;height:28px;background:#f7f8fa;border:1px solid #cdd3ca"></div>
<div class="t" style="left:395.6px;top:374.0px;font-size:13px;color:#a9aeb3;letter-spacing:-0.55px">FPR12</div>
<div class="a" style="left:484px;top:366.0px;width:52px;height:28px;background:#f7f8fa;border:1px solid #b5c6ce"></div>
<div class="t" style="left:494.2px;top:374.0px;font-size:13px;color:#a3abb2;letter-spacing:-0.45px">TD01</div>
<div class="t" style="left:587px;width:300px;text-align:center;top:374.0px;font-size:13px;color:#333;letter-spacing:0.16px">23/01/2025 16:51</div>
<div class="t" style="left:691.5px;width:300px;text-align:center;top:358.0px;font-size:13px;color:#333">2025-</div>
<div class="t" style="left:691.5px;width:300px;text-align:center;top:374.0px;font-size:13px;color:#333">V1-</div>
<div class="t" style="left:691.5px;width:300px;text-align:center;top:390.0px;font-size:13px;color:#333">000018</div>
<div class="t" style="left:795px;width:300px;text-align:center;top:374.0px;font-size:13px;color:#333;letter-spacing:0.1px">2025-01-20</div>
<div class="t" style="left:968px;width:300px;text-align:center;top:374.0px;font-size:13px;color:#333;letter-spacing:-0.05px">610,00 €</div>
<div class="a" style="left:1225px;top:366.0px;width:60px;height:28px;background:#3d85c8"></div>
<svg class="a" style="left:1236.8px;top:372.0px" width="18.8" height="14.2" viewBox="0 0 20.5 14.5"><path d="M0.8,0 V13.6 H20.5" fill="none" stroke="#fff" stroke-width="1.3"/><rect x="3.5" y="7.2" width="2.5" height="5.6" fill="#fff"/><rect x="7.3" y="3.4" width="2.5" height="9.4" fill="#fff"/><rect x="11.1" y="4.7" width="2.5" height="8.1" fill="#fff"/><rect x="15.1" y="1.5" width="2.5" height="11.3" fill="#fff"/></svg>
<svg class="a" style="left:1258.8px;top:374.0px" width="15.2" height="13.2" viewBox="0 0 15.2 13.2"><path d="M0,0.9 H3 L5.4,9 H13.3 L15.2,2.8 H4" fill="none" stroke="#fff" stroke-width="1.8" stroke-linejoin="round"/><path d="M4,2.8 H15.2 L13.3,9 H5.4Z" fill="#fff"/><circle cx="6.2" cy="11.8" r="1.4" fill="#fff"/><circle cx="12.6" cy="11.8" r="1.4" fill="#fff"/></svg>
<div class="a" style="left:1348px;top:363.0px;width:80px;height:34px;background:#7eb77a"></div>
<svg class="a" style="left:1360.8px;top:375.0px" width="14" height="10" viewBox="0 0 14 10"><path d="M0.8,5 Q7,-2.2 13.2,5 Q7,12.2 0.8,5Z" fill="none" stroke="#fff" stroke-width="1.6"/><circle cx="7" cy="5" r="2.7" fill="#fff"/></svg>
<svg class="a" style="left:1379.6px;top:373.4px" width="14.2" height="10.9" viewBox="0 0 12 10.5"><path d="M1.3,6.2 L4.6,9.3 L10.8,2" fill="none" stroke="#fff" stroke-width="3.4" stroke-linecap="butt" stroke-linejoin="miter"/></svg>
<div class="t" style="left:1399.5px;top:374.92px;font-size:12.5px;color:#fff;letter-spacing:-0.6px">RC</div>
<div class="a" style="left:1479px;top:366.0px;width:47px;height:28px;background:#fff;border:1px solid #cbcbcb"></div>
<svg class="a" style="left:1488.3px;top:373.2px" width="16.3" height="12.8" viewBox="0 0 16.3 12.8"><path d="M0,0.8 Q0,0 0.8,0 H15.5 Q16.3,0 16.3,0.8 V1.8 L8.15,7.4 L0,1.8Z" fill="#666"/><path d="M0,3.8 L8.15,9.4 L16.3,3.8 V12 Q16.3,12.8 15.5,12.8 H0.8 Q0,12.8 0,12Z" fill="#666"/></svg>
<div class="t" style="left:1509px;top:374.0px;font-size:13px;color:#333">0</div>
<div class="a" style="left:1581px;top:366.0px;width:36px;height:28px;background:#fff;border:1px solid #cfcfcf"></div>
<svg class="a" style="left:1590.8px;top:371.8px" width="16.2" height="15.4" viewBox="0 0 16 16"><g transform="rotate(-43 5.9 5.4)"><rect x="1.9" y="3.3" width="8" height="4.2" fill="#d9533f"/><rect x="1.2" y="2.3" width="2" height="6.2" rx="0.6" fill="#d9533f"/><rect x="8.6" y="2.3" width="2" height="6.2" rx="0.6" fill="#d9533f"/></g><path d="M8.4,7.9 L14.3,13.9" stroke="#d9533f" stroke-width="2.9" stroke-linecap="round"/></svg>
<div class="a" style="left:49px;top:454.0px;width:13px;height:13px;background:#fff;border:1px solid #6b6b6b;border-radius:2.5px"></div>
<div class="a" style="left:77px;top:446.0px;width:25px;height:28px;background:#fff;border:1px solid #8fa4b6"></div>
<svg class="a" style="left:87px;top:454.2px" width="6" height="10.8" viewBox="0 0 6 12.5"><circle cx="3.2" cy="1.9" r="1.9" fill="#56769b"/><path d="M0.2,4.5 H4.4 V10.4 H5.9 V12.5 H0 V10.4 H1.5 V6.5 H0.2Z" fill="#56769b"/></svg>
<div class="a" style="left:106px;top:446.0px;width:34px;height:28px;background:#fff;border:1px solid #adbea9"></div>
<svg class="a" style="left:116px;top:453.0px" width="14" height="13.8" viewBox="0 0 16 16"><path d="M15.2,0.8 L0.9,8.6 L5.2,10.4 L15.2,0.8 L7.3,11.6 L7.6,15 L9.6,12.3 L12.9,13.6Z" fill="none" stroke="#6d9669" stroke-width="1.25" stroke-linejoin="round"/><path d="M5.2,10.4 L7.6,15 L7.3,11.6Z" fill="#6d9669"/></svg>
<div class="a" style="left:187px;top:446.0px;width:68px;height:28px;background:#fff;border:1px solid #8ea7ba"></div>
<div class="t" style="left:197.7px;top:454.0px;font-size:13px;color:#66737f;letter-spacing:0.08px">Azioni</div>
<svg class="a" style="left:240.6px;top:456.4px" width="5" height="8" viewBox="0 0 5 8"><path d="M1,1 L4,4 L1,7" fill="none" stroke="#66737f" stroke-width="1.1"/></svg>
<div class="a" style="left:385px;top:446.0px;width:57px;height:28px;background:#fff;border:1px solid #cdd3ca"></div>
<div class="t" style="left:395.6px;top:454.0px;font-size:13px;color:#a9aeb3;letter-spacing:-0.55px">FPR12</div>
<div class="a" style="left:484px;top:446.0px;width:52px;height:28px;background:#fff;border:1px solid #b5c6ce"></div>
<div class="t" style="left:494.2px;top:454.0px;font-size:13px;color:#a3abb2;letter-spacing:-0.45px">TD01</div>
<div class="t" style="left:587px;width:300px;text-align:center;top:454.0px;font-size:13px;color:#333;letter-spacing:0.16px">23/01/2025 16:51</div>
<div class="t" style="left:691.5px;width:300px;text-align:center;top:438.0px;font-size:13px;color:#333">2025-</div>
<div class="t" style="left:691.5px;width:300px;text-align:center;top:454.0px;font-size:13px;color:#333">V1-</div>
<div class="t" style="left:691.5px;width:300px;text-align:center;top:470.0px;font-size:13px;color:#333">000017</div>
<div class="t" style="left:795px;width:300px;text-align:center;top:454.0px;font-size:13px;color:#333;letter-spacing:0.1px">2025-01-20</div>
<div class="t" style="left:968px;width:300px;text-align:center;top:454.0px;font-size:13px;color:#333;letter-spacing:-0.05px">610,00 €</div>
<div class="a" style="left:1225px;top:446.0px;width:60px;height:28px;background:#3d85c8"></div>
<svg class="a" style="left:1236.8px;top:452.0px" width="18.8" height="14.2" viewBox="0 0 20.5 14.5"><path d="M0.8,0 V13.6 H20.5" fill="none" stroke="#fff" stroke-width="1.3"/><rect x="3.5" y="7.2" width="2.5" height="5.6" fill="#fff"/><rect x="7.3" y="3.4" width="2.5" height="9.4" fill="#fff"/><rect x="11.1" y="4.7" width="2.5" height="8.1" fill="#fff"/><rect x="15.1" y="1.5" width="2.5" height="11.3" fill="#fff"/></svg>
<svg class="a" style="left:1258.8px;top:454.0px" width="15.2" height="13.2" viewBox="0 0 15.2 13.2"><path d="M0,0.9 H3 L5.4,9 H13.3 L15.2,2.8 H4" fill="none" stroke="#fff" stroke-width="1.8" stroke-linejoin="round"/><path d="M4,2.8 H15.2 L13.3,9 H5.4Z" fill="#fff"/><circle cx="6.2" cy="11.8" r="1.4" fill="#fff"/><circle cx="12.6" cy="11.8" r="1.4" fill="#fff"/></svg>
<div class="a" style="left:1348px;top:443.0px;width:80px;height:34px;background:#7eb77a"></div>
<svg class="a" style="left:1360.8px;top:455.0px" width="14" height="10" viewBox="0 0 14 10"><path d="M0.8,5 Q7,-2.2 13.2,5 Q7,12.2 0.8,5Z" fill="none" stroke="#fff" stroke-width="1.6"/><circle cx="7" cy="5" r="2.7" fill="#fff"/></svg>
<svg class="a" style="left:1379.6px;top:453.4px" width="14.2" height="10.9" viewBox="0 0 12 10.5"><path d="M1.3,6.2 L4.6,9.3 L10.8,2" fill="none" stroke="#fff" stroke-width="3.4" stroke-linecap="butt" stroke-linejoin="miter"/></svg>
<div class="t" style="left:1399.5px;top:454.92px;font-size:12.5px;color:#fff;letter-spacing:-0.6px">RC</div>
<div class="a" style="left:1479px;top:446.0px;width:47px;height:28px;background:#fff;border:1px solid #cbcbcb"></div>
<svg class="a" style="left:1488.3px;top:453.2px" width="16.3" height="12.8" viewBox="0 0 16.3 12.8"><path d="M0,0.8 Q0,0 0.8,0 H15.5 Q16.3,0 16.3,0.8 V1.8 L8.15,7.4 L0,1.8Z" fill="#666"/><path d="M0,3.8 L8.15,9.4 L16.3,3.8 V12 Q16.3,12.8 15.5,12.8 H0.8 Q0,12.8 0,12Z" fill="#666"/></svg>
<div class="t" style="left:1509px;top:454.0px;font-size:13px;color:#333">0</div>
<div class="a" style="left:1581px;top:446.0px;width:36px;height:28px;background:#fff;border:1px solid #cfcfcf"></div>
<svg class="a" style="left:1590.8px;top:451.8px" width="16.2" height="15.4" viewBox="0 0 16 16"><g transform="rotate(-43 5.9 5.4)"><rect x="1.9" y="3.3" width="8" height="4.2" fill="#d9533f"/><rect x="1.2" y="2.3" width="2" height="6.2" rx="0.6" fill="#d9533f"/><rect x="8.6" y="2.3" width="2" height="6.2" rx="0.6" fill="#d9533f"/></g><path d="M8.4,7.9 L14.3,13.9" stroke="#d9533f" stroke-width="2.9" stroke-linecap="round"/></svg>
<div class="a" style="left:49px;top:534.0px;width:13px;height:13px;background:#fff;border:1px solid #6b6b6b;border-radius:2.5px"></div>
<div class="a" style="left:77px;top:526.0px;width:25px;height:28px;background:#f7f8fa;border:1px solid #8fa4b6"></div>
<svg class="a" style="left:87px;top:534.2px" width="6" height="10.8" viewBox="0 0 6 12.5"><circle cx="3.2" cy="1.9" r="1.9" fill="#56769b"/><path d="M0.2,4.5 H4.4 V10.4 H5.9 V12.5 H0 V10.4 H1.5 V6.5 H0.2Z" fill="#56769b"/></svg>
<div class="a" style="left:106px;top:526.0px;width:34px;height:28px;background:#f7f8fa;border:1px solid #adbea9"></div>
<svg class="a" style="left:116px;top:533.0px" width="14" height="13.8" viewBox="0 0 16 16"><path d="M15.2,0.8 L0.9,8.6 L5.2,10.4 L15.2,0.8 L7.3,11.6 L7.6,15 L9.6,12.3 L12.9,13.6Z" fill="none" stroke="#6d9669" stroke-width="1.25" stroke-linejoin="round"/><path d="M5.2,10.4 L7.6,15 L7.3,11.6Z" fill="#6d9669"/></svg>
<div class="a" style="left:187px;top:526.0px;width:68px;height:28px;background:#f7f8fa;border:1px solid #8ea7ba"></div>
<div class="t" style="left:197.7px;top:534.0px;font-size:13px;color:#66737f;letter-spacing:0.08px">Azioni</div>
<svg class="a" style="left:240.6px;top:536.4px" width="5" height="8" viewBox="0 0 5 8"><path d="M1,1 L4,4 L1,7" fill="none" stroke="#66737f" stroke-width="1.1"/></svg>
<div class="a" style="left:385px;top:526.0px;width:57px;height:28px;background:#f7f8fa;border:1px solid #cdd3ca"></div>
<div class="t" style="left:395.6px;top:534.0px;font-size:13px;color:#a9aeb3;letter-spacing:-0.55px">FPR12</div>
<div class="a" style="left:484px;top:526.0px;width:52px;height:28px;background:#f7f8fa;border:1px solid #b5c6ce"></div>
<div class="t" style="left:494.2px;top:534.0px;font-size:13px;color:#a3abb2;letter-spacing:-0.45px">TD01</div>
<div class="t" style="left:587px;width:300px;text-align:center;top:534.0px;font-size:13px;color:#333;letter-spacing:0.16px">23/01/2025 16:51</div>
<div class="t" style="left:691.5px;width:300px;text-align:center;top:518.0px;font-size:13px;color:#333">2025-</div>
<div class="t" style="left:691.5px;width:300px;text-align:center;top:534.0px;font-size:13px;color:#333">V1-</div>
<div class="t" style="left:691.5px;width:300px;text-align:center;top:550.0px;font-size:13px;color:#333">000016</div>
<div class="t" style="left:795px;width:300px;text-align:center;top:534.0px;font-size:13px;color:#333;letter-spacing:0.1px">2025-01-20</div>
<div class="t" style="left:968px;width:300px;text-align:center;top:534.0px;font-size:13px;color:#333;letter-spacing:-0.05px">320,22 €</div>
<div class="a" style="left:1225px;top:526.0px;width:60px;height:28px;background:#3d85c8"></div>
<svg class="a" style="left:1236.8px;top:532.0px" width="18.8" height="14.2" viewBox="0 0 20.5 14.5"><path d="M0.8,0 V13.6 H20.5" fill="none" stroke="#fff" stroke-width="1.3"/><rect x="3.5" y="7.2" width="2.5" height="5.6" fill="#fff"/><rect x="7.3" y="3.4" width="2.5" height="9.4" fill="#fff"/><rect x="11.1" y="4.7" width="2.5" height="8.1" fill="#fff"/><rect x="15.1" y="1.5" width="2.5" height="11.3" fill="#fff"/></svg>
<svg class="a" style="left:1258.8px;top:534.0px" width="15.2" height="13.2" viewBox="0 0 15.2 13.2"><path d="M0,0.9 H3 L5.4,9 H13.3 L15.2,2.8 H4" fill="none" stroke="#fff" stroke-width="1.8" stroke-linejoin="round"/><path d="M4,2.8 H15.2 L13.3,9 H5.4Z" fill="#fff"/><circle cx="6.2" cy="11.8" r="1.4" fill="#fff"/><circle cx="12.6" cy="11.8" r="1.4" fill="#fff"/></svg>
<div class="a" style="left:1348px;top:523.0px;width:80px;height:34px;background:#7eb77a"></div>
<svg class="a" style="left:1360.8px;top:535.0px" width="14" height="10" viewBox="0 0 14 10"><path d="M0.8,5 Q7,-2.2 13.2,5 Q7,12.2 0.8,5Z" fill="none" stroke="#fff" stroke-width="1.6"/><circle cx="7" cy="5" r="2.7" fill="#fff"/></svg>
<svg class="a" style="left:1379.6px;top:533.4px" width="14.2" height="10.9" viewBox="0 0 12 10.5"><path d="M1.3,6.2 L4.6,9.3 L10.8,2" fill="none" stroke="#fff" stroke-width="3.4" stroke-linecap="butt" stroke-linejoin="miter"/></svg>
<div class="t" style="left:1399.5px;top:534.92px;font-size:12.5px;color:#fff;letter-spacing:-0.6px">RC</div>
<div class="a" style="left:1479px;top:526.0px;width:47px;height:28px;background:#fff;border:1px solid #cbcbcb"></div>
<svg class="a" style="left:1488.3px;top:533.2px" width="16.3" height="12.8" viewBox="0 0 16.3 12.8"><path d="M0,0.8 Q0,0 0.8,0 H15.5 Q16.3,0 16.3,0.8 V1.8 L8.15,7.4 L0,1.8Z" fill="#666"/><path d="M0,3.8 L8.15,9.4 L16.3,3.8 V12 Q16.3,12.8 15.5,12.8 H0.8 Q0,12.8 0,12Z" fill="#666"/></svg>
<div class="t" style="left:1509px;top:534.0px;font-size:13px;color:#333">0</div>
<div class="a" style="left:1581px;top:526.0px;width:36px;height:28px;background:#fff;border:1px solid #cfcfcf"></div>
<svg class="a" style="left:1590.8px;top:531.8px" width="16.2" height="15.4" viewBox="0 0 16 16"><g transform="rotate(-43 5.9 5.4)"><rect x="1.9" y="3.3" width="8" height="4.2" fill="#d9533f"/><rect x="1.2" y="2.3" width="2" height="6.2" rx="0.6" fill="#d9533f"/><rect x="8.6" y="2.3" width="2" height="6.2" rx="0.6" fill="#d9533f"/></g><path d="M8.4,7.9 L14.3,13.9" stroke="#d9533f" stroke-width="2.9" stroke-linecap="round"/></svg>
<div class="a" style="left:49px;top:590.0px;width:13px;height:13px;background:#fff;border:1px solid #6b6b6b;border-radius:2.5px"></div>
<div class="a" style="left:77px;top:582.0px;width:25px;height:28px;background:#fff;border:1px solid #8fa4b6"></div>
<svg class="a" style="left:87px;top:590.2px" width="6" height="10.8" viewBox="0 0 6 12.5"><circle cx="3.2" cy="1.9" r="1.9" fill="#56769b"/><path d="M0.2,4.5 H4.4 V10.4 H5.9 V12.5 H0 V10.4 H1.5 V6.5 H0.2Z" fill="#56769b"/></svg>
<div class="a" style="left:106px;top:582.0px;width:34px;height:28px;background:#fff;border:1px solid #adbea9"></div>
<svg class="a" style="left:116px;top:589.0px" width="14" height="13.8" viewBox="0 0 16 16"><path d="M15.2,0.8 L0.9,8.6 L5.2,10.4 L15.2,0.8 L7.3,11.6 L7.6,15 L9.6,12.3 L12.9,13.6Z" fill="none" stroke="#6d9669" stroke-width="1.25" stroke-linejoin="round"/><path d="M5.2,10.4 L7.6,15 L7.3,11.6Z" fill="#6d9669"/></svg>
<div class="a" style="left:187px;top:582.0px;width:68px;height:28px;background:#fff;border:1px solid #8ea7ba"></div>
<div class="t" style="left:197.7px;top:590.0px;font-size:13px;color:#66737f;letter-spacing:0.08px">Azioni</div>
<svg class="a" style="left:240.6px;top:592.4px" width="5" height="8" viewBox="0 0 5 8"><path d="M1,1 L4,4 L1,7" fill="none" stroke="#66737f" stroke-width="1.1"/></svg>
<div class="a" style="left:385px;top:582.0px;width:57px;height:28px;background:#fff;border:1px solid #cdd3ca"></div>
<div class="t" style="left:395.6px;top:590.0px;font-size:13px;color:#a9aeb3;letter-spacing:-0.55px">FPR12</div>
<div class="a" style="left:484px;top:582.0px;width:52px;height:28px;background:#fff;border:1px solid #b5c6ce"></div>
<div class="t" style="left:494.2px;top:590.0px;font-size:13px;color:#a3abb2;letter-spacing:-0.45px">TD01</div>
<div class="t" style="left:587px;width:300px;text-align:center;top:590.0px;font-size:13px;color:#333;letter-spacing:0.16px">23/01/2025 16:51</div>
<div class="t" style="left:691.5px;width:300px;text-align:center;top:574.0px;font-size:13px;color:#333">2025-</div>
<div class="t" style="left:691.5px;width:300px;text-align:center;top:590.0px;font-size:13px;color:#333">V1-</div>
<div class="t" style="left:691.5px;width:300px;text-align:center;top:606.0px;font-size:13px;color:#333">000015</div>
<div class="t" style="left:795px;width:300px;text-align:center;top:590.0px;font-size:13px;color:#333;letter-spacing:0.1px">2025-01-20</div>
<div class="t" style="left:968px;width:300px;text-align:center;top:590.0px;font-size:13px;color:#333;letter-spacing:-0.05px">317,20 €</div>
<div class="a" style="left:1225px;top:582.0px;width:60px;height:28px;background:#3d85c8"></div>
<svg class="a" style="left:1236.8px;top:588.0px" width="18.8" height="14.2" viewBox="0 0 20.5 14.5"><path d="M0.8,0 V13.6 H20.5" fill="none" stroke="#fff" stroke-width="1.3"/><rect x="3.5" y="7.2" width="2.5" height="5.6" fill="#fff"/><rect x="7.3" y="3.4" width="2.5" height="9.4" fill="#fff"/><rect x="11.1" y="4.7" width="2.5" height="8.1" fill="#fff"/><rect x="15.1" y="1.5" width="2.5" height="11.3" fill="#fff"/></svg>
<svg class="a" style="left:1258.8px;top:590.0px" width="15.2" height="13.2" viewBox="0 0 15.2 13.2"><path d="M0,0.9 H3 L5.4,9 H13.3 L15.2,2.8 H4" fill="none" stroke="#fff" stroke-width="1.8" stroke-linejoin="round"/><path d="M4,2.8 H15.2 L13.3,9 H5.4Z" fill="#fff"/><circle cx="6.2" cy="11.8" r="1.4" fill="#fff"/><circle cx="12.6" cy="11.8" r="1.4" fill="#fff"/></svg>
<div class="a" style="left:1348px;top:579.0px;width:80px;height:34px;background:#7eb77a"></div>
<svg class="a" style="left:1360.8px;top:591.0px" width="14" height="10" viewBox="0 0 14 10"><path d="M0.8,5 Q7,-2.2 13.2,5 Q7,12.2 0.8,5Z" fill="none" stroke="#fff" stroke-width="1.6"/><circle cx="7" cy="5" r="2.7" fill="#fff"/></svg>
<svg class="a" style="left:1379.6px;top:589.4px" width="14.2" height="10.9" viewBox="0 0 12 10.5"><path d="M1.3,6.2 L4.6,9.3 L10.8,2" fill="none" stroke="#fff" stroke-width="3.4" stroke-linecap="butt" stroke-linejoin="miter"/></svg>
<div class="t" style="left:1399.5px;top:590.92px;font-size:12.5px;color:#fff;letter-spacing:-0.6px">RC</div>
<div class="a" style="left:1479px;top:582.0px;width:47px;height:28px;background:#fff;border:1px solid #cbcbcb"></div>
<svg class="a" style="left:1488.3px;top:589.2px" width="16.3" height="12.8" viewBox="0 0 16.3 12.8"><path d="M0,0.8 Q0,0 0.8,0 H15.5 Q16.3,0 16.3,0.8 V1.8 L8.15,7.4 L0,1.8Z" fill="#666"/><path d="M0,3.8 L8.15,9.4 L16.3,3.8 V12 Q16.3,12.8 15.5,12.8 H0.8 Q0,12.8 0,12Z" fill="#666"/></svg>
<div class="t" style="left:1509px;top:590.0px;font-size:13px;color:#333">0</div>
<div class="a" style="left:1581px;top:582.0px;width:36px;height:28px;background:#fff;border:1px solid #cfcfcf"></div>
<svg class="a" style="left:1590.8px;top:587.8px" width="16.2" height="15.4" viewBox="0 0 16 16"><g transform="rotate(-43 5.9 5.4)"><rect x="1.9" y="3.3" width="8" height="4.2" fill="#d9533f"/><rect x="1.2" y="2.3" width="2" height="6.2" rx="0.6" fill="#d9533f"/><rect x="8.6" y="2.3" width="2" height="6.2" rx="0.6" fill="#d9533f"/></g><path d="M8.4,7.9 L14.3,13.9" stroke="#d9533f" stroke-width="2.9" stroke-linecap="round"/></svg>
</body></html>
